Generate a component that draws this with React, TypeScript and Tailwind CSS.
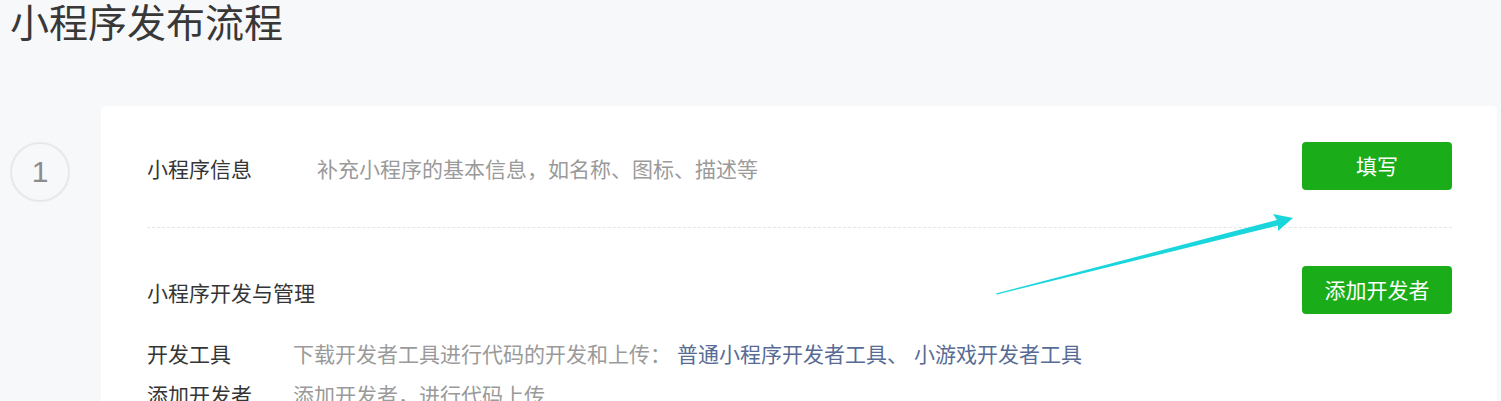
import React from "react";

export default function App() {
  const font = { fontFamily: '"Noto Sans CJK SC", "Noto Sans", sans-serif' };
  return (
    <div className="relative w-[1501px] h-[401px] overflow-hidden bg-[#f7f8fa]" style={font}>
      <h1 className="pl-[10px] pt-[1px] text-[39px] leading-[39px] text-[#383838] font-normal">小程序发布流程</h1>
      <div className="flex mt-[66px] pr-[4px]">
        <div className="w-[101px] shrink-0 pl-[10px] pt-[36px]">
          <div className="w-[60px] h-[60px] rounded-full border-2 border-[#e7e8ea] flex items-center justify-center text-[30px] text-[#8c8c8c] leading-none" style={{ fontFamily: '"Liberation Sans", sans-serif' }}>
            1
          </div>
        </div>
        <div className="flex-1 bg-white rounded-[5px] pt-[36px] pl-[46px] pr-[45px] h-[400px]">
          <div className="flex items-center justify-between h-[48px]">
            <div className="flex items-center text-[21px] pt-[5px]">
              <span className="w-[170px] text-[#353535]">小程序信息</span>
              <span className="text-[#9a9a9a]">补充小程序的基本信息，如名称、图标、描述等</span>
            </div>
            <button className="w-[150px] h-[48px] rounded-[4px] bg-[#1aad19] text-white text-[21px]">填写</button>
          </div>
          <div className="mt-[37px] border-t border-dashed border-[#e5e5e5]"></div>
          <div className="flex items-center justify-between h-[48px] mt-[38px]">
            <span className="text-[21px] text-[#353535] pt-[6px]">小程序开发与管理</span>
            <button className="w-[150px] h-[48px] rounded-[4px] bg-[#1aad19] text-white text-[21px]">添加开发者</button>
          </div>
          <div className="mt-[19px] text-[21px] leading-[41px]">
            <div className="flex">
              <span className="w-[146px] text-[#353535]">开发工具</span>
              <span className="text-[#9a9a9a]">下载开发者工具进行代码的开发和上传：</span>
              <span className="ml-[6px] text-[#576b95]">普通小程序开发者工具、</span>
              <span className="ml-[6px] text-[#576b95]">小游戏开发者工具</span>
            </div>
            <div className="flex">
              <span className="w-[146px] text-[#353535]">添加开发者</span>
              <span className="text-[#9a9a9a]">添加开发者，进行代码上传</span>
            </div>
          </div>
        </div>
      </div>
      <svg className="absolute left-0 top-0 pointer-events-none" width="1501" height="401">
        <polygon
          points="996,293.6 1277,220 1273,214 1293,218 1278,231 1278,225.5 997,294.4"
          fill="#19d6dc"
        />
      </svg>
    </div>
  );
}
